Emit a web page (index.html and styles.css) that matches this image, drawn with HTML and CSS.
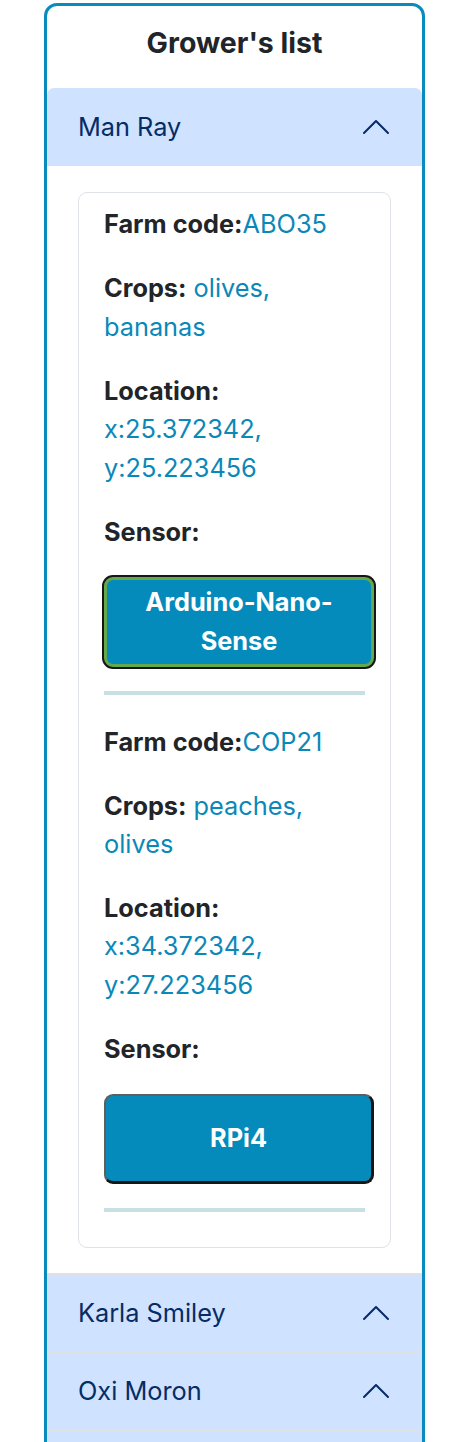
FILE: index.html
```html
<!DOCTYPE html>
<html lang="en">
<head>
<meta charset="utf-8">
<title>Grower's list</title>
<link rel="stylesheet" href="styles.css">
</head>
<body>
<div class="growers">
  <h3 class="growers-title">Grower's list</h3>
  <div class="accordion">
    <div class="acc-item">
      <div class="acc-header first">
        <span class="acc-name">Man Ray</span>
        <svg class="chev" viewBox="0 0 16 16" width="32" height="32" fill="none" stroke="#052c65" stroke-linecap="round" stroke-linejoin="round"><path d="M2 11L8 5L14 11"/></svg>
      </div>
      <div class="acc-body">
        <div class="farm-card">
          <div class="record">
            <p class="field"><b>Farm code:</b><span class="val">ABO35</span></p>
            <p class="field"><b>Crops:</b> <span class="val">olives,</span> <span class="val">bananas</span></p>
            <p class="field"><b>Location:</b> <span class="val">x:25.372342,</span> <span class="val">y:25.223456</span></p>
            <p class="field"><b>Sensor:</b></p>
            <button class="sensor-btn focused" type="button">Arduino-Nano-Sense</button>
            <div class="rule"></div>
          </div>
          <div class="record">
            <p class="field"><b>Farm code:</b><span class="val">COP21</span></p>
            <p class="field"><b>Crops:</b> <span class="val">peaches,</span> <span class="val">olives</span></p>
            <p class="field"><b>Location:</b> <span class="val">x:34.372342,</span> <span class="val">y:27.223456</span></p>
            <p class="field"><b>Sensor:</b></p>
            <button class="sensor-btn" type="button">RPi4</button>
            <div class="rule"></div>
          </div>
        </div>
      </div>
    </div>
    <div class="acc-item">
      <div class="acc-header">
        <span class="acc-name">Karla Smiley</span>
        <svg class="chev" viewBox="0 0 16 16" width="32" height="32" fill="none" stroke="#052c65" stroke-linecap="round" stroke-linejoin="round"><path d="M2 11L8 5L14 11"/></svg>
      </div>
    </div>
    <div class="acc-item">
      <div class="acc-header">
        <span class="acc-name">Oxi Moron</span>
        <svg class="chev" viewBox="0 0 16 16" width="32" height="32" fill="none" stroke="#052c65" stroke-linecap="round" stroke-linejoin="round"><path d="M2 11L8 5L14 11"/></svg>
      </div>
    </div>
    <div class="acc-item">
      <div class="acc-header"></div>
    </div>
  </div>
</div>
</body>
</html>
```
FILE: styles.css
```css
* { box-sizing: border-box; }

body {
  margin: 0;
  background: #ffffff;
  font-family: Inter, "Noto Sans", "DejaVu Sans", sans-serif;
  color: #212529;
}

.growers {
  width: 381px;
  margin: 3px 0 0 44px;
  border: 3px solid #0a8bbd;
  border-radius: 13px;
  overflow: hidden;
  background: #ffffff;
}

.growers-title {
  margin: 0;
  padding: 19px 0 28px;
  height: 82px;
  text-align: center;
  font-size: 28.5px;
  line-height: 35px;
  font-weight: 700;
  color: #212529;
}

.acc-item + .acc-item {
  border-top: 2px solid #dee2e6;
}

.acc-header {
  height: 76px;
  display: flex;
  align-items: center;
  justify-content: space-between;
  padding: 0 30px 0 31px;
  background: #cfe2ff;
  color: #052c65;
  font-size: 25.3px;
  line-height: 38.4px;
}

.acc-header.first {
  height: 78px;
  border-radius: 7px 7px 0 0;
}

.chev {
  display: block;
  flex: none;
}

.acc-body {
  padding: 25.6px 31px;
}

.farm-card {
  border: 1px solid #dee2e6;
  border-radius: 9px;
  padding: 12.8px 25px;
}

.field {
  margin: 0 0 25.6px;
  font-size: 25.3px;
  line-height: 38.4px;
}

.field b {
  font-weight: 700;
  color: #212529;
}

.val {
  color: #0a88b8;
}

.sensor-btn {
  display: flex;
  align-items: center;
  justify-content: center;
  width: 270px;
  height: 90px;
  padding: 0 19px;
  background: #048bbb;
  color: #ffffff;
  font-family: Inter, "Noto Sans", sans-serif;
  font-weight: 700;
  font-size: 25.3px;
  line-height: 38.4px;
  text-align: center;
  border-style: solid;
  border-color: #5e5e5e #161616 #161616 #5e5e5e;
  border-width: 2px 3px 3px 2px;
  border-radius: 9px;
}

.sensor-btn.focused {
  border: 3px solid #64a84c;
  box-shadow: 0 0 0 2px #161616;
}

.rule {
  height: 4px;
  margin: 24px 0 28px;
  background: #c8e0e4;
}

.record:last-child .rule {
  margin-bottom: 22px;
}
```
